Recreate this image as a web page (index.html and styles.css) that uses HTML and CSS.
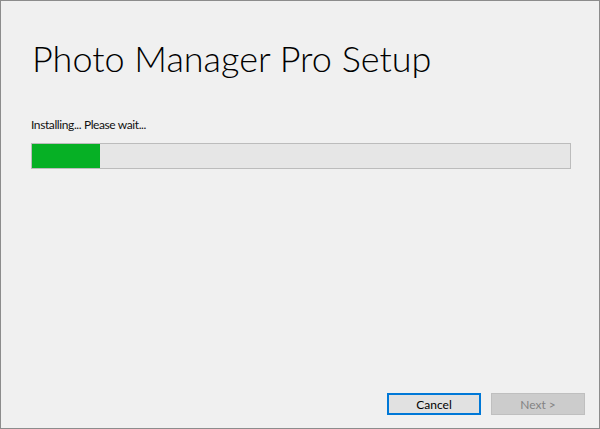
FILE: index.html
```html
<!DOCTYPE html>
<html lang="en">
<head>
<meta charset="utf-8">
<title>Photo Manager Pro Setup</title>
<link rel="stylesheet" href="styles.css">
</head>
<body>
<div class="window">
  <main class="content">
    <h1 class="title">Photo Manager Pro Setup</h1>
    <p class="status">Installing... Please wait...</p>
    <div class="progress"><div class="progress-fill" style="width: 68px"></div></div>
  </main>
  <footer class="footer">
    <button class="btn btn-primary" type="button">Cancel</button>
    <button class="btn btn-disabled" type="button" disabled>Next &gt;</button>
  </footer>
</div>
</body>
</html>
```
FILE: styles.css
```css
html, body {
  margin: 0;
  padding: 0;
  width: 600px;
  height: 429px;
  overflow: hidden;
  background: #f0f0f0;
}

.window {
  box-sizing: border-box;
  width: 600px;
  height: 429px;
  border: 1px solid #8c8c8c;
  background: #f0f0f0;
  display: flex;
  flex-direction: column;
  font-family: Lato, "Liberation Sans", sans-serif;
  color: #000;
}

.content {
  flex: 1;
  display: flex;
  flex-direction: column;
  padding: 35px 27px 0 30px;
}

.title {
  margin: 0;
  font-family: Lato, "Open Sans", sans-serif;
  font-weight: 300;
  font-size: 36px;
  line-height: 44px;
  color: #000;
  padding-left: 1px;
}

.status {
  margin: 37px 0 0 0;
  font-size: 12px;
  letter-spacing: -0.4px;
  line-height: 16px;
  color: #111;
}

.progress {
  margin-top: 10px;
  box-sizing: border-box;
  width: 540px;
  height: 26px;
  border: 1px solid #bcbcbc;
  background: #e6e6e6;
}

.progress-fill {
  height: 100%;
  background: #06b025;
}

.footer {
  display: flex;
  justify-content: flex-end;
  gap: 10px;
  padding: 0 14px 13px 0;
}

.btn {
  box-sizing: border-box;
  width: 94px;
  height: 22px;
  font-family: Lato, "Liberation Sans", sans-serif;
  font-size: 12px;
  padding: 0;
  margin: 0;
}

.btn-primary {
  background: #e1e1e1;
  border: 2px solid #0078d7;
  color: #000;
}

.btn-disabled {
  background: #cccccc;
  border: 1px solid #bfbfbf;
  color: #838383;
}
```
